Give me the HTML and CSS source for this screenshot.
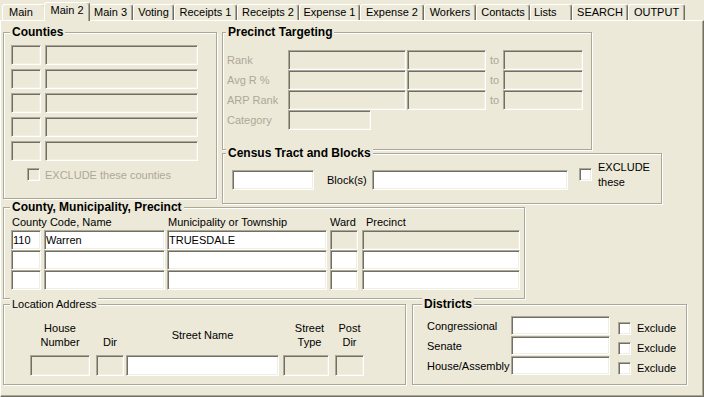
FILE: index.html
```html
<!DOCTYPE html>
<html lang="en">
<head>
<meta charset="UTF-8">
<title>Main 2</title>
<link rel="stylesheet" href="styles.css">
</head>
<body>
<div class="window">

  <!-- tabs -->
  <div class="tabs">
    <div class="tab tab-first">Main</div>
    <div class="tab tab-active">Main 2</div>
    <div class="tab">Main 3</div>
    <div class="tab">Voting</div>
    <div class="tab">Receipts 1</div>
    <div class="tab">Receipts 2</div>
    <div class="tab">Expense 1</div>
    <div class="tab">Expense 2</div>
    <div class="tab">Workers</div>
    <div class="tab">Contacts</div>
    <div class="tab tab-lists">Lists</div>
    <div class="tab">SEARCH</div>
    <div class="tab">OUTPUT</div>
  </div>

  <div class="panel">
    <div class="top-row">

      <!-- Counties -->
      <div class="group counties">
        <div class="group-title">Counties</div>
        <div class="county-list">
          <div class="county-row"><input type="text" class="field code-box" disabled><input type="text" class="field cname-box" disabled></div>
          <div class="county-row"><input type="text" class="field code-box" disabled><input type="text" class="field cname-box" disabled></div>
          <div class="county-row"><input type="text" class="field code-box" disabled><input type="text" class="field cname-box" disabled></div>
          <div class="county-row"><input type="text" class="field code-box" disabled><input type="text" class="field cname-box" disabled></div>
          <div class="county-row"><input type="text" class="field code-box" disabled><input type="text" class="field cname-box" disabled></div>
          <label class="exclude-counties"><input type="checkbox" class="check" disabled>EXCLUDE these counties</label>
        </div>
      </div>

      <div class="right-col">
        <!-- Precinct Targeting -->
        <div class="group precinct">
          <div class="group-title">Precinct Targeting</div>
          <div class="target-list">
            <div class="target-row">
              <span class="target-label">Rank</span>
              <input type="text" class="field rank-from" disabled>
              <input type="text" class="field rank-mid" disabled>
              <span class="to-label">to</span>
              <input type="text" class="field rank-to" disabled>
            </div>
            <div class="target-row">
              <span class="target-label">Avg R %</span>
              <input type="text" class="field rank-from" disabled>
              <input type="text" class="field rank-mid" disabled>
              <span class="to-label">to</span>
              <input type="text" class="field rank-to" disabled>
            </div>
            <div class="target-row">
              <span class="target-label">ARP Rank</span>
              <input type="text" class="field rank-from" disabled>
              <input type="text" class="field rank-mid" disabled>
              <span class="to-label">to</span>
              <input type="text" class="field rank-to" disabled>
            </div>
            <div class="target-row">
              <span class="target-label">Category</span>
              <input type="text" class="field category-box" disabled>
            </div>
          </div>
        </div>

        <!-- Census -->
        <div class="group census">
          <div class="group-title">Census Tract and Blocks</div>
          <div class="census-row">
            <input type="text" class="field tract-box">
            <span class="block-label">Block(s)</span>
            <input type="text" class="field block-box">
            <input type="checkbox" class="check">
            <span class="exclude-these">EXCLUDE<br>these</span>
          </div>
        </div>
      </div>
    </div>

    <!-- County, Municipality, Precinct -->
    <div class="group cmp">
      <div class="group-title">County, Municipality, Precinct</div>
      <div class="cmp-grid">
        <span class="cmp-head head-county">County Code, Name</span>
        <span class="cmp-head head-muni">Municipality or Township</span>
        <span class="cmp-head">Ward</span>
        <span class="cmp-head head-precinct">Precinct</span>

        <input type="text" class="field w-code" value="110">
        <input type="text" class="field w-name" value="Warren">
        <input type="text" class="field w-muni" value="TRUESDALE">
        <input type="text" class="field w-ward" disabled>
        <input type="text" class="field w-precinct" disabled>

        <input type="text" class="field w-code">
        <input type="text" class="field w-name">
        <input type="text" class="field w-muni">
        <input type="text" class="field w-ward">
        <input type="text" class="field w-precinct">

        <input type="text" class="field w-code">
        <input type="text" class="field w-name">
        <input type="text" class="field w-muni">
        <input type="text" class="field w-ward">
        <input type="text" class="field w-precinct">
      </div>
    </div>

    <div class="bottom-row">
      <!-- Location Address -->
      <div class="group location">
        <div class="group-title plain">Location Address</div>
        <div class="address">
          <div class="addr-col col-house">
            <div class="addr-head">House<br>Number</div>
            <input type="text" class="field" disabled>
          </div>
          <div class="addr-col col-dir">
            <div class="addr-head">Dir</div>
            <input type="text" class="field" disabled>
          </div>
          <div class="addr-col col-street">
            <div class="addr-head middle">Street Name</div>
            <input type="text" class="field">
          </div>
          <div class="addr-col col-type">
            <div class="addr-head">Street<br>Type</div>
            <input type="text" class="field" disabled>
          </div>
          <div class="addr-col col-post">
            <div class="addr-head">Post<br>Dir</div>
            <input type="text" class="field" disabled>
          </div>
        </div>
      </div>

      <!-- Districts -->
      <div class="group districts">
        <div class="group-title">Districts</div>
        <div class="district-list">
          <div class="district-row">
            <span class="district-label">Congressional</span>
            <input type="text" class="field district-box">
            <input type="checkbox" class="check">
            <span class="exclude-label">Exclude</span>
          </div>
          <div class="district-row">
            <span class="district-label">Senate</span>
            <input type="text" class="field district-box">
            <input type="checkbox" class="check">
            <span class="exclude-label">Exclude</span>
          </div>
          <div class="district-row">
            <span class="district-label">House/Assembly</span>
            <input type="text" class="field district-box">
            <input type="checkbox" class="check">
            <span class="exclude-label">Exclude</span>
          </div>
        </div>
      </div>
    </div>
  </div>
</div>
</body>
</html>
```

FILE: styles.css
```css
body {
  margin: 0;
  background-color: #ece9d8;
  font: 11px "Liberation Sans", Arial, sans-serif;
  color: #000;
}

.window {
  width: 704px;
  height: 397px;
  overflow: hidden;
}

/* tabs */
.tabs {
  display: flex;
  align-items: flex-end;
  height: 20px;
  padding-left: 2px;
}

.tab {
  box-sizing: border-box;
  height: 16px;
  border-top: 1px solid #fff;
  border-left: 1px solid #fff;
  border-right: 1px solid #716f64;
  box-shadow: inset -1px 0 0 #aca899;
  border-radius: 3px 3px 0 0;
  line-height: 15px;
  text-align: center;
  white-space: nowrap;
}

.tab:nth-child(1) { width: 44px; }
.tab:nth-child(2) { width: 46px; }
.tab:nth-child(3) { width: 45px; }
.tab:nth-child(4) { width: 41px; }
.tab:nth-child(5) { width: 63px; }
.tab:nth-child(6) { width: 62px; }
.tab:nth-child(7) { width: 61px; }
.tab:nth-child(8) { width: 64px; }
.tab:nth-child(9) { width: 52px; }
.tab:nth-child(10) { width: 54px; }
.tab:nth-child(11) { width: 42px; }
.tab:nth-child(12) { width: 56px; }
.tab:nth-child(13) { width: 57px; }

.tab-first, .tab-lists {
  text-align: left;
  padding-left: 6px;
}

.tab-lists {
  padding-left: 3px;
}

.tab-active {
  position: relative;
  z-index: 1;
  height: 19px;
  margin: 0 -2px -1px;
  line-height: 14px;
  background-color: #ece9d8;
}

/* page */
.panel {
  box-sizing: border-box;
  height: 377px;
  border: 1px solid;
  border-color: #fff #716f64 #716f64 #fff;
  box-shadow: inset -1px -1px 0 #aca899;
  padding: 11px 0 0 2px;
}

.group {
  box-sizing: border-box;
  border: 1px solid #aca899;
  box-shadow: inset 1px 1px 0 #fff, 1px 1px 0 #fff;
}

.group-title {
  width: fit-content;
  margin: -8px 0 0 6px;
  padding: 0 2px;
  line-height: 14px;
  font-size: 12px;
  font-weight: bold;
  background-color: #ece9d8;
}

.group-title.plain {
  font-size: 11px;
  font-weight: normal;
}

.field {
  box-sizing: border-box;
  height: 20px;
  margin: 0;
  padding: 0 1px;
  border: 1px solid;
  border-color: #aca899 #fff #fff #aca899;
  box-shadow: inset 1px 1px 0 #716f64, inset -1px -1px 0 #f1efe2;
  background-color: #fff;
  font: inherit;
  color: #000;
  outline: none;
}

.field:disabled {
  background-color: #ece9d8;
}

.check {
  appearance: none;
  flex: none;
  box-sizing: border-box;
  width: 13px;
  height: 13px;
  margin: 0;
  border: 1px solid;
  border-color: #aca899 #fff #fff #aca899;
  box-shadow: inset 1px 1px 0 #716f64, inset -1px -1px 0 #f1efe2;
  background-color: #fff;
}

.check:disabled {
  background-color: #ece9d8;
}

.top-row {
  display: flex;
  align-items: flex-start;
}

.right-col {
  display: flex;
  flex-direction: column;
  gap: 3px;
  margin-left: 5px;
}

/* counties */
.counties {
  width: 214px;
  height: 167px;
}

.county-list {
  display: flex;
  flex-direction: column;
  gap: 4px;
  padding: 6px 0 0 7px;
}

.county-row {
  display: flex;
  gap: 4px;
}

.code-box { width: 30px; }
.cname-box { width: 153px; }

.exclude-counties {
  display: flex;
  align-items: center;
  height: 13px;
  margin-top: 3px;
  padding-left: 16px;
  color: #aca899;
}

.exclude-counties .check {
  margin-right: 5px;
}

/* precinct targeting */
.precinct {
  width: 370px;
  height: 118px;
}

.precinct .group-title, .census .group-title {
  margin-left: 3px;
}

.target-list {
  padding: 11px 0 0 4px;
}

.target-row {
  display: flex;
  align-items: center;
  height: 20px;
}

.target-label {
  width: 61px;
  color: #aca899;
}

.rank-from { width: 118px; }
.rank-mid { width: 79px; margin-left: 1px; }
.rank-to { width: 80px; }
.category-box { width: 83px; }

.to-label {
  width: 13px;
  padding-left: 4px;
  color: #aca899;
}

/* census */
.census {
  width: 440px;
  height: 51px;
}

.census-row {
  display: flex;
  align-items: flex-start;
  padding-left: 9px;
}

.tract-box { width: 82px; margin-top: 10px; }
.block-box { width: 196px; margin-top: 10px; }

.block-label {
  width: 45px;
  margin: 10px 0 0 13px;
  line-height: 20px;
}

.census-row .check {
  margin: 8px 0 0 11px;
}

.exclude-these {
  margin-left: 6px;
  line-height: 15px;
}

/* county, municipality, precinct */
.cmp {
  width: 522px;
  height: 92px;
  margin-top: 3px;
}

.cmp-grid {
  display: grid;
  grid-template-columns: 33px 123px 163px 32px 158px;
  grid-template-rows: 15px repeat(3, 20px);
  padding: 1px 0 0 7px;
}

.cmp-head {
  line-height: 14px;
  white-space: nowrap;
}

.head-county { grid-column: span 2; padding-left: 1px; }
.head-muni { padding-left: 1px; }
.head-precinct { padding-left: 4px; }

.w-code { width: 30px; }
.w-name { width: 121px; }
.w-muni { width: 160px; }
.w-ward { width: 28px; }
.w-precinct { width: 158px; }

/* location address */
.bottom-row {
  display: flex;
  margin-top: 5px;
}

.location {
  width: 403px;
  height: 81px;
}

.address {
  display: flex;
  padding: 10px 0 0 26px;
}

.addr-col {
  display: flex;
  flex-direction: column;
}

.addr-head {
  display: flex;
  align-items: flex-end;
  justify-content: center;
  height: 28px;
  line-height: 14px;
  text-align: center;
  white-space: nowrap;
}

.addr-head.middle {
  align-items: center;
}

.addr-col .field {
  width: 100%;
  height: 21px;
  margin-top: 6px;
}

.col-house { width: 60px; }
.col-dir { width: 28px; margin-left: 6px; }
.col-street { width: 153px; margin-left: 2px; }
.col-type { width: 46px; margin-left: 4px; }
.col-post { width: 29px; margin-left: 6px; }

.col-type .addr-head {
  padding-left: 7px;
}

/* districts */
.districts {
  width: 275px;
  height: 81px;
  margin-left: 6px;
}

.districts .group-title {
  margin-left: 9px;
}

.district-list {
  display: flex;
  flex-direction: column;
  gap: 1px;
  padding: 5px 0 0 14px;
}

.district-row {
  display: flex;
  align-items: center;
  height: 19px;
}

.district-label {
  width: 84px;
  white-space: nowrap;
}

.district-box {
  width: 99px;
  height: 19px;
}

.district-row .check {
  align-self: flex-start;
  margin: 6px 6px 0 8px;
}

.exclude-label {
  align-self: flex-start;
  margin-top: 6px;
  line-height: 13px;
}
```
